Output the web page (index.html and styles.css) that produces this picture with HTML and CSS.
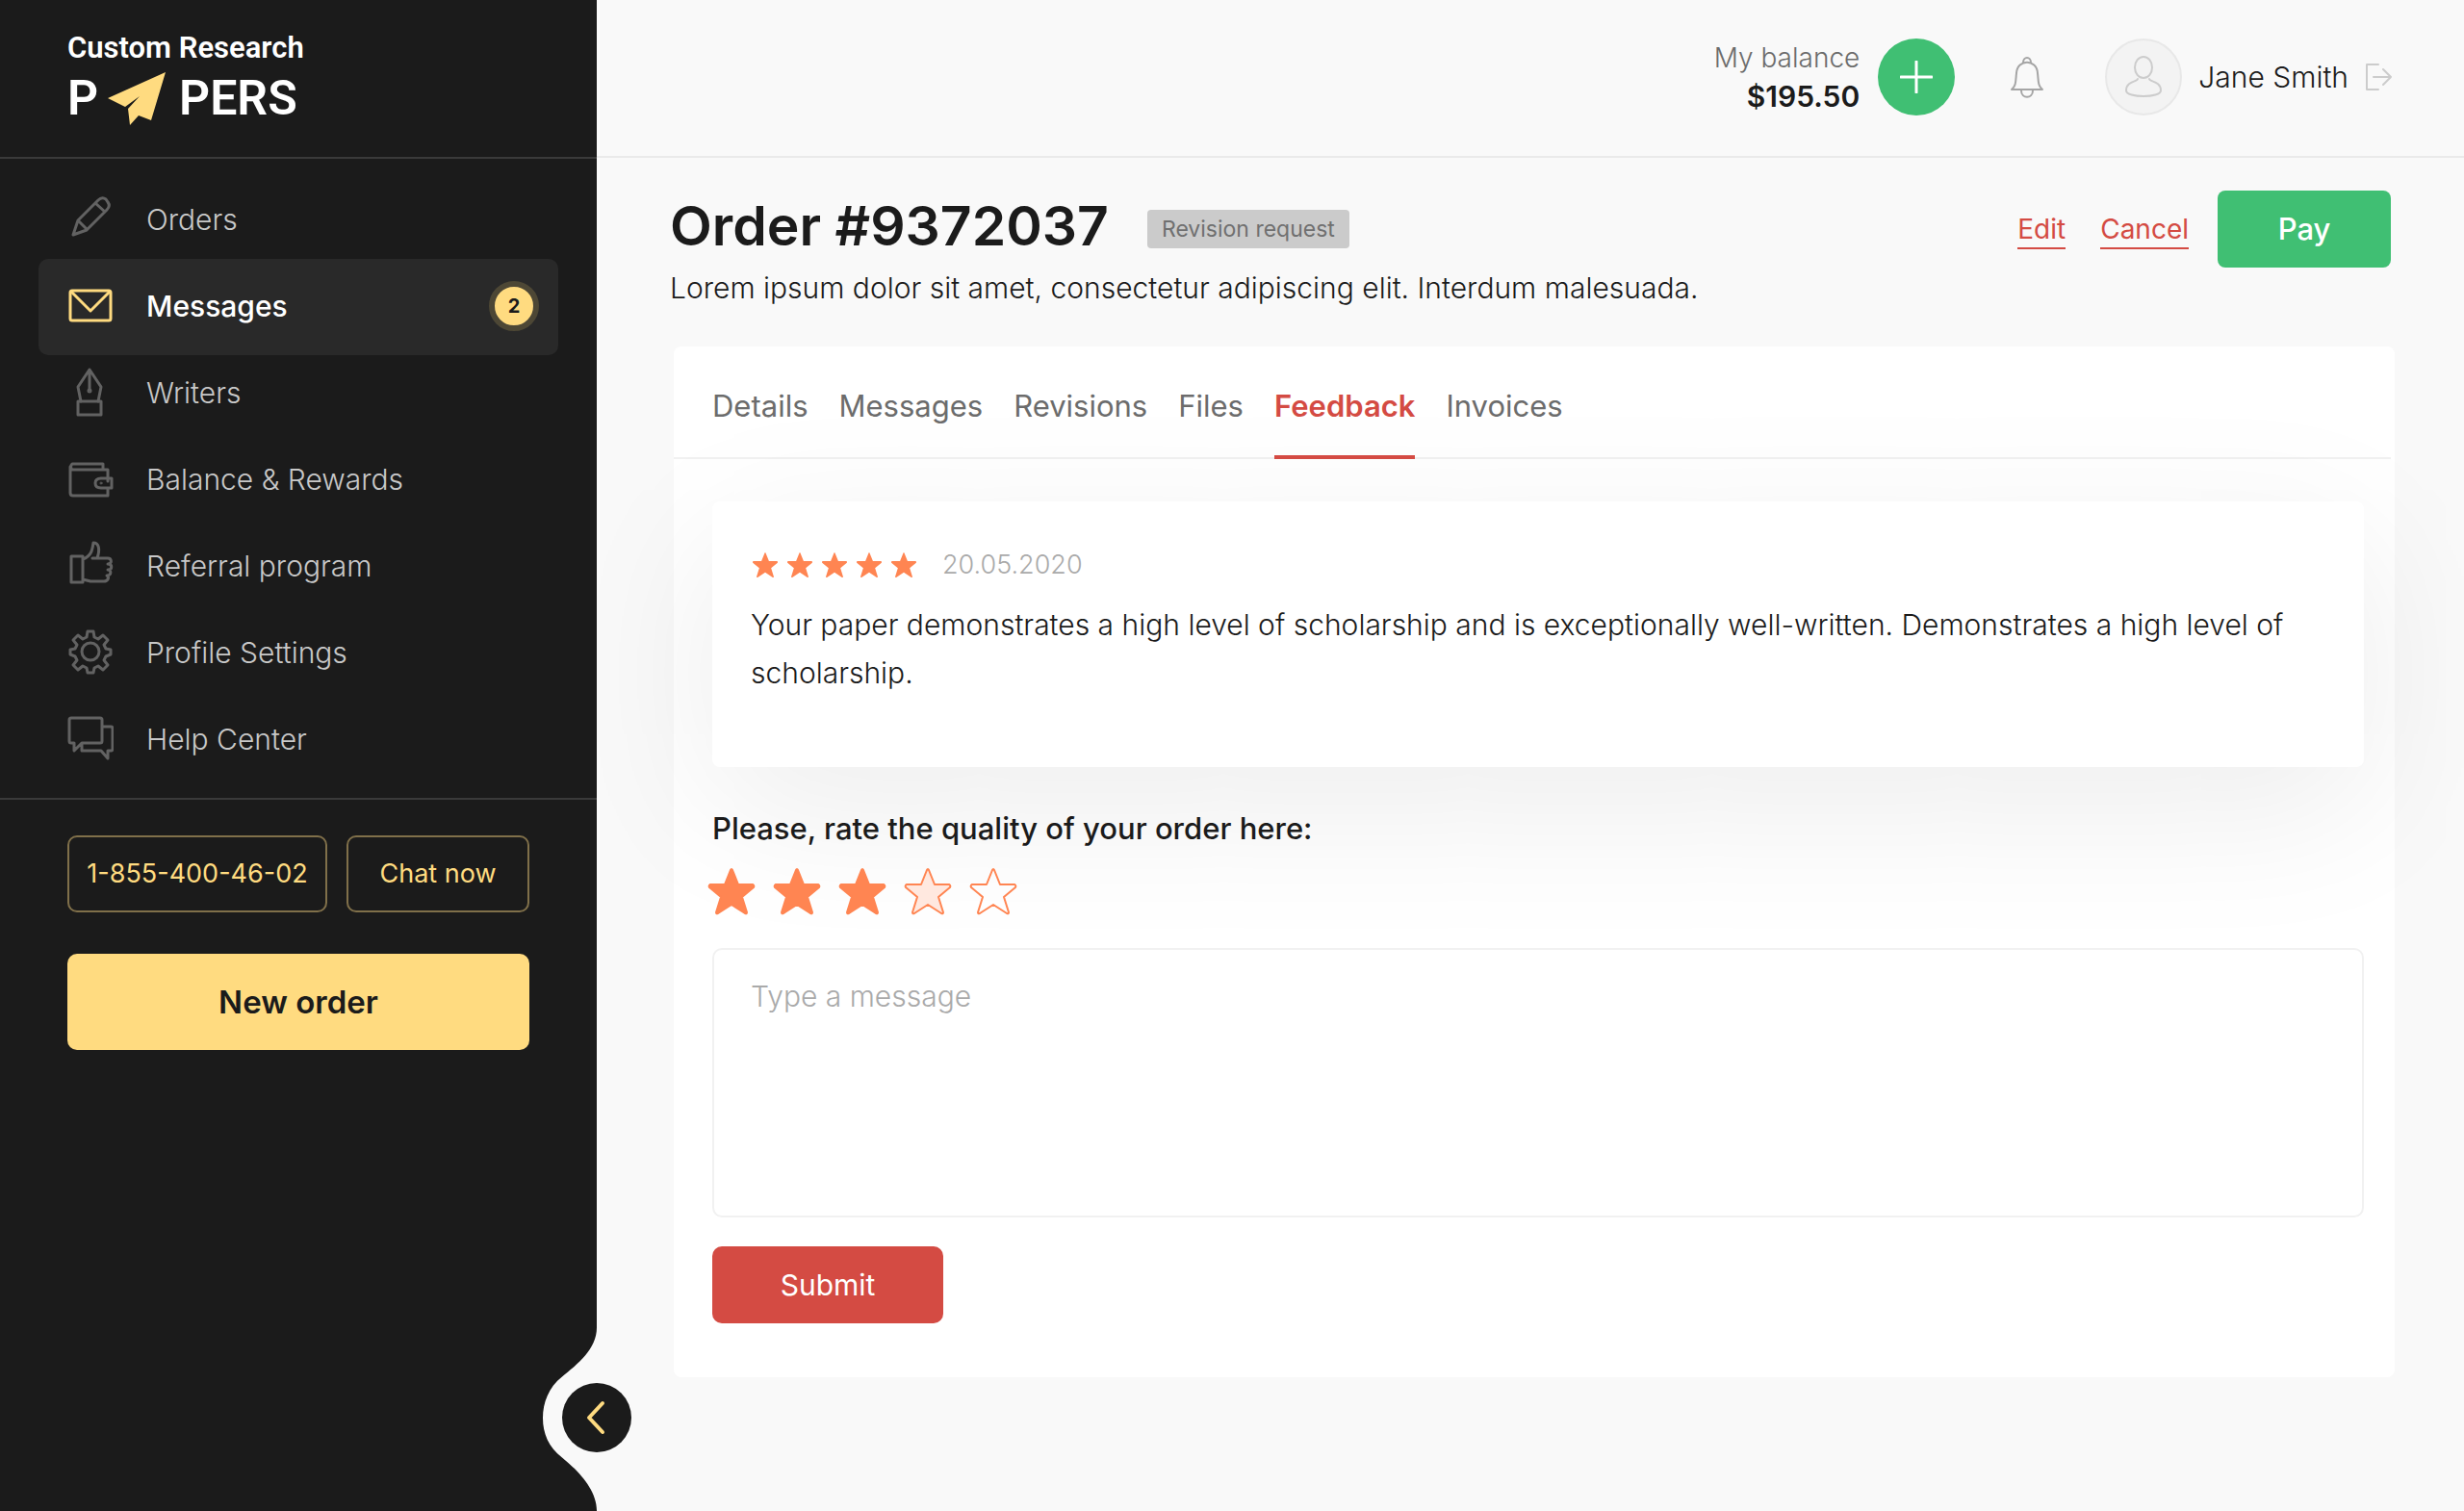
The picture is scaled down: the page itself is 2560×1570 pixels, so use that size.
FILE: index.html
```html
<!DOCTYPE html>
<html lang="en">
<head>
<meta charset="utf-8">
<meta name="viewport" content="width=device-width, initial-scale=1">
<title>Order #9372037 – Custom Research Papers</title>
<link rel="stylesheet" href="styles.css">
</head>
<body>
<div class="app">
  <aside class="sidebar">
    <a class="logo" href="#" aria-label="Custom Research Papers">
      <span class="logo-top">Custom Research</span>
      <span class="logo-bottom">
        <span>P</span>
        <svg class="logo-plane" viewBox="0 0 60 55" aria-hidden="true"><path d="M60 0 0 27l18 9 15-11-12 13 2 17 9-10 13 5z"/></svg>
        <span>PERS</span>
      </span>
    </a>
    <nav class="menu">
      <a class="menu-item" href="#">
        <svg class="icon" viewBox="0 0 48 60" aria-hidden="true"><path d="M6 46 11 31 32 10q4-4 8-1l2 3q3 4-1 8L20 41zM11 31l9 9M29 13l10 9"/></svg>
        <span>Orders</span>
      </a>
      <a class="menu-item is-active" href="#">
        <svg class="icon" viewBox="0 0 48 60" aria-hidden="true"><rect x="3" y="14" width="42" height="31" rx="2"/><path d="m4 15 20 20 20-20"/></svg>
        <span>Messages</span>
        <span class="count">2</span>
      </a>
      <a class="menu-item" href="#">
        <svg class="icon" viewBox="0 0 48 60" aria-hidden="true"><path d="M14 39 11 24 23 6l12 18-3 15M23 7v20"/><rect x="11" y="39" width="24" height="14"/><circle cx="23" cy="28" r="1"/></svg>
        <span>Writers</span>
      </a>
      <a class="menu-item" href="#">
        <svg class="icon" viewBox="0 0 48 60" aria-hidden="true"><path d="M42 32V20H5q-3-3 0-6h32v6M3 17v27q0 3 3 3h36v-8M46 29H35q-6 0-6 5t6 5h11z"/><circle cx="35" cy="34" r="1" stroke-width="1"/></svg>
        <span>Balance &amp; Rewards</span>
      </a>
      <a class="menu-item" href="#">
        <svg class="icon" viewBox="0 0 48 60" aria-hidden="true"><path d="M4 20h12v27H4zM16 23c9-3 10-10 11-17 6 0 7 7 4 16h11c4 0 5 6 0 6 5 0 5 6 0 6 4 0 4 6-1 6 3 2 1 6-3 6H24l-8-2M26 22h6"/></svg>
        <span>Referral program</span>
      </a>
      <a class="menu-item" href="#">
        <svg class="icon" viewBox="0 0 48 60" aria-hidden="true"><circle cx="24" cy="29" r="9"/><path d="m20 14 1-6h6l1 6 4 2 5-4 5 5-4 5 2 4 5 1v5l-5 2-2 4 4 5-5 5-5-4-4 2-1 5h-6l-1-5-4-2-5 4-5-5 4-5-2-4-5-2v-5l5-1 2-4-4-5 5-5 5 4z"/></svg>
        <span>Profile Settings</span>
      </a>
      <a class="menu-item" href="#">
        <svg class="icon" viewBox="0 0 48 60" aria-hidden="true"><path d="M36 10v22q0 2-2 2H15l-8 8v-8H4q-2 0-2-2V10q0-2 2-2h30q2 0 2 2zM36 17h9q2 0 2 2v21q0 2-2 2h-3v8l-7-8H15v-8"/></svg>
        <span>Help Center</span>
      </a>
    </nav>
    <div class="contact">
      <a class="outline phone" href="tel:18554004602">1-855-400-46-02</a>
      <button class="outline chat" type="button">Chat now</button>
      <button class="new-order" type="button">New order</button>
    </div>
    <div class="collapse">
      <svg class="notch" viewBox="0 0 56 190" aria-hidden="true"><path d="M56 0C56 22 36 38 20 51 6 62 0 78 0 94s6 30 20 41C36 148 56 168 56 190z"/></svg>
      <button class="collapse-button" type="button" aria-label="Collapse menu">
        <svg viewBox="0 0 72 72" aria-hidden="true"><path d="M42 21 28 36l14 15"/></svg>
      </button>
    </div>
  </aside>

  <div class="content">
    <header class="topbar">
      <p class="balance"><span class="balance-label">My balance</span><strong class="balance-sum">$195.50</strong></p>
      <button class="add" type="button" aria-label="Add funds"><svg viewBox="0 0 34 34" aria-hidden="true"><path d="M17 1v32M1 17h32"/></svg></button>
      <button class="bell" type="button" aria-label="Notifications"><svg viewBox="0 0 36 44" aria-hidden="true"><path d="M14 7a4 5 0 1 1 8 0M2 35c5-4 4-9 5-17C8 3 28 3 29 18c1 8 0 13 5 17zM12 36c0 9 12 9 12 0"/></svg></button>
      <div class="user">
        <span class="avatar"><svg viewBox="0 0 40 44" aria-hidden="true"><ellipse cx="20" cy="12" rx="9" ry="11"/><path d="M14 24c0 3-12 2-12 12 0 8 36 8 36 0 0-10-12-9-12-12"/></svg></span>
        <span class="user-name">Jane Smith</span>
        <a class="logout" href="#" aria-label="Log out"><svg viewBox="0 0 28 28" aria-hidden="true"><path d="M14 1H2v26h12M9 14h18M19 6l8 8-8 8"/></svg></a>
      </div>
    </header>

    <main class="page">
      <div class="heading">
        <div class="heading-text">
          <div class="heading-row">
            <h1>Order #9372037</h1>
            <span class="status">Revision request</span>
          </div>
          <p class="summary">Lorem ipsum dolor sit amet, consectetur adipiscing elit. Interdum malesuada.</p>
        </div>
        <div class="actions">
          <a class="text-link" href="#">Edit</a>
          <a class="text-link" href="#">Cancel</a>
          <button class="pay" type="button">Pay</button>
        </div>
      </div>

      <section class="card">
        <nav class="tabs">
          <a class="tab" href="#">Details</a>
          <a class="tab" href="#">Messages</a>
          <a class="tab" href="#">Revisions</a>
          <a class="tab" href="#">Files</a>
          <a class="tab is-current" href="#" aria-current="page">Feedback</a>
          <a class="tab" href="#">Invoices</a>
        </nav>
        <svg class="sprite" aria-hidden="true"><symbol id="star" viewBox="0 0 50 50"><path d="M24 3q1-2 2 0l6 15h15q2 1 1 3L36 31l5 16q0 2-2 1L25 39l-14 9q-2 1-2-1l5-16L2 21q-1-2 1-3h15z"/></symbol></svg>
        <div class="card-body">
          <article class="review">
            <div class="review-head">
              <span class="review-stars" role="img" aria-label="5 out of 5">
                <svg><use href="#star"/></svg><svg><use href="#star"/></svg><svg><use href="#star"/></svg><svg><use href="#star"/></svg><svg><use href="#star"/></svg>
              </span>
              <time datetime="2020-05-20">20.05.2020</time>
            </div>
            <p class="review-text">Your paper demonstrates a high level of scholarship and is exceptionally well-written. Demonstrates a high level of scholarship.</p>
          </article>
          <form class="feedback">
            <fieldset class="rating">
              <legend>Please, rate the quality of your order here:</legend>
              <div class="rating-stars">
                <label class="full"><input type="radio" name="rate" value="1" aria-label="1 star"><svg><use href="#star"/></svg></label>
                <label class="full"><input type="radio" name="rate" value="2" aria-label="2 stars"><svg><use href="#star"/></svg></label>
                <label class="full"><input type="radio" name="rate" value="3" aria-label="3 stars" checked><svg><use href="#star"/></svg></label>
                <label class="tinted"><input type="radio" name="rate" value="4" aria-label="4 stars"><svg><use href="#star"/></svg></label>
                <label><input type="radio" name="rate" value="5" aria-label="5 stars"><svg><use href="#star"/></svg></label>
              </div>
            </fieldset>
            <textarea class="message" aria-label="Message" placeholder="Type a message"></textarea>
            <button class="submit" type="submit">Submit</button>
          </form>
        </div>
      </section>
    </main>
  </div>
</div>
</body>
</html>
```
FILE: styles.css
```css
* { box-sizing: border-box; }
body {
  margin: 0;
  background: #f9f9f9;
  color: #1b1b1b;
  font-family: "Inter", "Open Sans", sans-serif;
  font-size: 30px;
  font-weight: 300;
  line-height: 40px;
}
h1, p { margin: 0; }
a { color: inherit; text-decoration: none; }
button { margin: 0; padding: 0; border: 0; background: none; color: inherit; font: inherit; cursor: pointer; }
svg { display: block; fill: none; stroke: currentColor; stroke-width: 2; stroke-linecap: round; stroke-linejoin: round; }

.app { display: grid; grid-template-columns: 620px 1fr; min-height: 100vh; }

/* Sidebar */
.sidebar { position: relative; z-index: 1; display: flex; flex-direction: column; background: #1b1b1b; color: #c8c8c8; }
.logo {
  display: flex; flex-direction: column; height: 165px; padding: 28px 70px 0;
  border-bottom: 2px solid #3a3a3a; color: #fff;
  font-family: "Roboto", sans-serif; font-weight: 600;
}
.logo-top { font-size: 31px; line-height: 44px; }
.logo-bottom { display: flex; align-items: center; gap: 10px; font-size: 50px; line-height: 60px; }
.logo-plane { width: 60px; height: 55px; margin-right: 4px; fill: #ffdb80; stroke: none; }

.menu { display: flex; flex-direction: column; padding: 19px 40px 15px; }
.menu-item { display: flex; align-items: center; gap: 34px; height: 90px; padding: 0 20px 3px 30px; }
.menu-item .icon { width: 48px; height: 60px; color: #626262; stroke-width: 3; }
.menu-item.is-active { height: 100px; margin: -5px 0; border-radius: 10px; background: #292929; color: #fff; font-weight: 500; }
.menu-item.is-active .icon { color: #ffdb80; }
.count {
  width: 52px; height: 52px; margin-left: auto; border: 6px solid #4d4735; border-radius: 50%;
  background: #ffdb80; color: #1b1b1b; font-size: 20px; font-weight: 700; line-height: 40px; text-align: center;
}
.contact { display: grid; grid-template-columns: 270px 190px; column-gap: 20px; row-gap: 43px; padding: 37px 70px; border-top: 2px solid #3a3a3a; }
.outline { height: 80px; border: 2px solid #80704a; border-radius: 10px; color: #ffdb80; font-size: 27px; font-weight: 400; line-height: 76px; text-align: center; }
.new-order { grid-column: 1 / -1; height: 100px; border-radius: 10px; background: #ffdb80; color: #1b1b1b; font-size: 33px; font-weight: 600; }

.collapse { position: absolute; right: 0; bottom: 0; width: 56px; height: 191px; }
.notch { width: 56px; height: 191px; fill: #f9f9f9; stroke: none; }
.collapse-button { position: absolute; top: 58px; right: -36px; width: 72px; height: 72px; border-radius: 50%; background: #1b1b1b; color: #ffdb80; }
.collapse-button svg { stroke-width: 4; }

/* Top bar */
.topbar { display: flex; align-items: center; justify-content: flex-end; height: 164px; padding: 0 75px 2px 0; border-bottom: 2px solid #eaeaea; }
.balance { display: flex; flex-direction: column; margin-right: 19px; font-size: 28px; text-align: right; }
.balance-label { color: #6c6c6c; }
.balance-sum { font-size: 30px; font-weight: 600; }
.add { display: grid; place-items: center; width: 80px; height: 80px; margin-right: 57px; border-radius: 50%; background: #40bf73; color: #fff; }
.add svg { width: 34px; height: 34px; stroke-width: 3; }
.bell { margin-right: 63px; color: #a5a5a5; }
.bell svg { width: 36px; height: 44px; }
.user { display: flex; align-items: center; gap: 17px; }
.avatar { display: grid; place-items: center; width: 80px; height: 80px; border: 2px solid #e8e8e8; border-radius: 50%; background: #f3f3f3; color: #ccc; }
.avatar svg { width: 40px; height: 44px; }
.logout { color: #ccc; }
.logout svg { width: 28px; height: 28px; }

/* Order heading */
.page { padding: 34px 72px 138px 76px; }
.heading { display: flex; justify-content: space-between; padding-right: 4px; }
.heading-row { display: flex; align-items: center; gap: 40px; height: 80px; }
h1 { padding-bottom: 6px; font-size: 57px; font-weight: 600; line-height: 70px; }
.status { height: 40px; padding: 0 15px; border-radius: 4px; background: #cbcbcb; color: #707070; font-size: 23px; font-weight: 400; }
.summary { padding-top: 1px; }
.actions { display: flex; align-items: center; gap: 36px; height: 80px; }
.text-link { padding-top: 2px; border-bottom: 2px solid #d44b43; color: #d44b43; font-size: 28px; font-weight: 400; line-height: 38px; }
.pay { width: 180px; height: 80px; margin-left: -6px; border-radius: 8px; background: #40bf73; color: #fff; font-size: 31px; font-weight: 500; }

/* Feedback card */
.card { margin: 41px 0 0 4px; border-radius: 8px; background: #fff; }
.tabs { display: flex; gap: 32px; height: 117px; margin-right: 4px; padding: 0 40px; border-bottom: 2px solid #f1f1f1; }
.tab { padding-top: 42px; color: #6c6c6c; font-size: 31px; font-weight: 400; }
.tab.is-current { height: 117px; border-bottom: 4px solid #d44b43; color: #d44b43; font-weight: 600; }
.sprite { position: absolute; width: 0; height: 0; }
.card-body { padding: 44px 32px 56px 40px; }
.review { min-height: 276px; padding: 46px 40px; border-radius: 8px; background: #fff; box-shadow: 0 40px 160px rgba(0, 0, 0, 0.08); }
.review-head { display: flex; align-items: center; gap: 26px; color: #aaa; font-size: 27px; }
.review-stars { display: flex; gap: 8px; padding-left: 1px; }
.review-stars svg { width: 28px; height: 28px; fill: #ff8552; stroke: none; }
.review-text { margin-top: 17px; line-height: 50px; }
.feedback { position: relative; }
.rating { margin: 44px 0 0; padding: 0; border: 0; }
legend { padding: 0; font-size: 31px; font-weight: 500; }
.rating-stars { display: flex; gap: 18px; margin: 20px 0 34px -5px; }
.rating-stars label { position: relative; color: #ff8552; cursor: pointer; }
.rating-stars input { position: absolute; inset: 0; margin: 0; opacity: 0; }
.rating-stars svg { width: 50px; height: 50px; }
.full svg { fill: #ff8552; }
.tinted svg { fill: #ffe8df; }
.message { display: block; width: 100%; height: 280px; padding: 28px 38px; border: 2px solid #f1f1f1; border-radius: 10px; background: #fff; font: inherit; resize: none; }
.message::placeholder { color: #aaa; opacity: 1; }
.submit { width: 240px; height: 80px; margin-top: 30px; border-radius: 10px; background: #d44b43; color: #fff; font-weight: 400; }
```
